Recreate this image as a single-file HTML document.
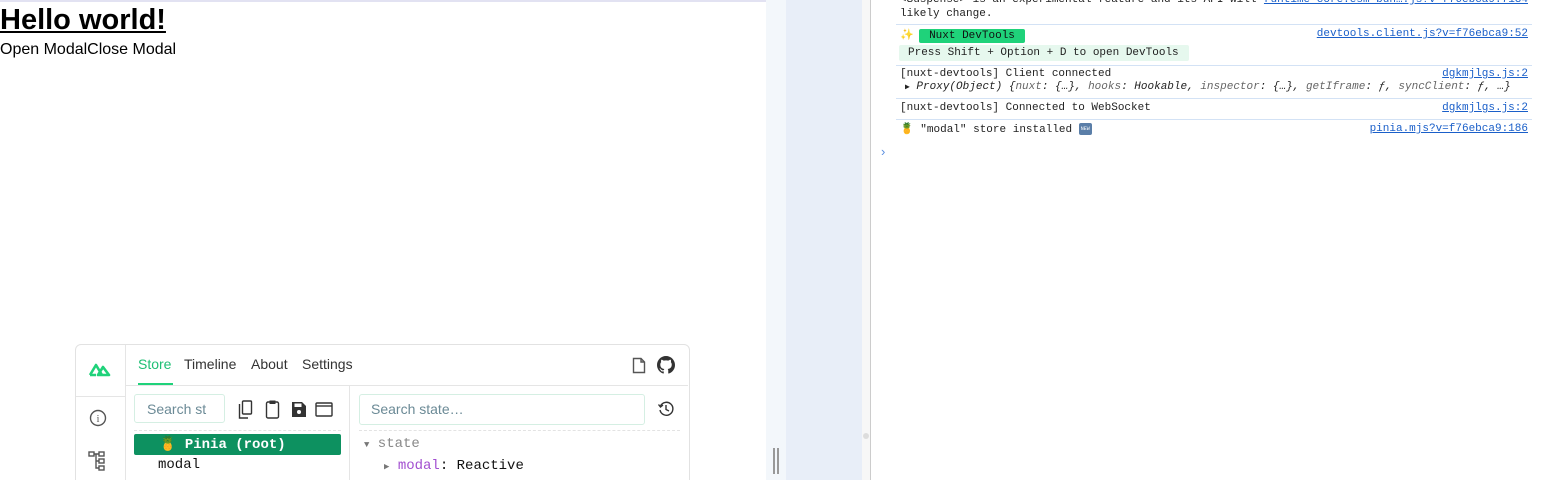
<!DOCTYPE html>
<html style="overflow:hidden;height:480px"><head><style>
body{margin:0;width:1543px;height:480px;overflow:hidden;position:relative;font-family:"Liberation Sans",sans-serif;background:#fff}
.a{position:absolute}
.mono{font-family:"Liberation Mono","DejaVu Sans Mono",monospace}
.c{font-size:11px;color:#222;left:900px;position:absolute;line-height:13px}
.lk{position:absolute;right:15px;font-size:11px;color:#1a5fc9;text-decoration:underline;font-family:"Liberation Mono",monospace}
.sep{position:absolute;left:896px;right:11px;height:1px;background:#d3e2f5}
.ic{stroke:#555;fill:none;stroke-width:1.4}
</style></head><body>
<div class="a" style="left:0;top:0;width:766px;height:2px;background:#e2e2f2"></div>
<div class="a" style="left:0;top:2px;font-size:29px;font-weight:bold;text-decoration:underline;color:#000;line-height:36px">Hello world!</div>
<div class="a" style="left:0;top:41px;font-size:16px;color:#000">Open ModalClose Modal</div>
<div class="a" style="left:766px;top:0;width:20px;height:480px;background:#f3f7fb"></div>
<div class="a" style="left:786px;top:0;width:76px;height:480px;background:#e8eef8"></div>
<div class="a" style="left:862px;top:0;width:8px;height:480px;background:#f7f7f7"></div>
<div class="a" style="left:870px;top:0;width:1px;height:480px;background:#ccc"></div>
<div class="a" style="left:773px;top:448px;width:2px;height:26px;background:#999"></div>
<div class="a" style="left:777px;top:448px;width:2px;height:26px;background:#999"></div>
<div class="a" style="left:863px;top:433px;width:6px;height:6px;border-radius:3px;background:#ddd"></div>

<div class="c mono" style="top:-6px">&lt;Suspense&gt; is an experimental feature and its API will</div>
<div class="lk" style="top:-6px">runtime-core.esm-bun….js?v=f76ebca9:7134</div>
<div class="c mono" style="top:8px">likely change.</div>
<div class="sep" style="top:24px"></div>
<div class="c" style="top:29px;left:900px">✨</div>
<div class="a mono" style="left:919px;top:29px;width:106px;height:14px;background:#1fd27a;border-radius:2px;font-size:11px;line-height:14px;text-align:center;color:#111">Nuxt DevTools</div>
<div class="lk" style="top:28px">devtools.client.js?v=f76ebca9:52</div>
<div class="a mono" style="left:899px;top:45px;width:290px;height:16px;background:#e6f8ee;border-radius:2px;font-size:11px;line-height:16px;color:#222;padding-left:9px;box-sizing:border-box">Press Shift + Option + D to open DevTools</div>
<div class="sep" style="top:65px"></div>
<div class="c mono" style="top:68px">[nuxt-devtools] Client connected</div>
<div class="lk" style="top:68px">dgkmjlgs.js:2</div>
<div class="c mono" style="top:81px;left:905px;font-style:italic"><span style="font-size:8px;font-style:normal">▶</span> Proxy(Object) {<span style="color:#666">nuxt</span>: {…}, <span style="color:#666">hooks</span>: Hookable, <span style="color:#666">inspector</span>: {…}, <span style="color:#666">getIframe</span>: ƒ, <span style="color:#666">syncClient</span>: ƒ, …}</div>
<div class="sep" style="top:98px"></div>
<div class="c mono" style="top:102px">[nuxt-devtools] Connected to WebSocket</div>
<div class="lk" style="top:102px">dgkmjlgs.js:2</div>
<div class="sep" style="top:119px"></div>
<div class="c mono" style="top:123px">🍍 "modal" store installed <span style="display:inline-block;width:13px;height:12px;background:#5a7ea8;border-radius:2px;vertical-align:middle;font-size:5px;color:#fff;line-height:12px;text-align:center">NEW</span></div>
<div class="lk" style="top:123px">pinia.mjs?v=f76ebca9:186</div>
<div class="a" style="left:881px;top:144px;color:#5b8fe0;font-size:13px">›</div>

<div class="a" style="left:75px;top:344px;width:613px;height:140px;border:1px solid #e2e2e2;border-radius:6px;background:#fff"></div>
<div class="a" style="left:125px;top:345px;width:1px;height:135px;background:#e5e5e5"></div>
<div class="a" style="left:76px;top:396px;width:49px;height:1px;background:#e5e5e5"></div>
<div class="a" style="left:126px;top:385px;width:562px;height:1px;background:#e5e5e5"></div>
<div class="a" style="left:349px;top:386px;width:1px;height:94px;background:#e5e5e5"></div>
<svg class="a" style="left:88px;top:360px" width="24" height="18" viewBox="0 0 24 18"><path d="M2 15 L8 5 L14 15 M10 15 L15 7 L21 15 Z M2 15 H8" stroke="#1fd27a" stroke-width="2.6" fill="none" stroke-linejoin="round"/></svg>
<svg class="a" style="left:89px;top:409px" width="18" height="18"><circle cx="9" cy="9" r="7.5" class="ic" stroke-width="1.1"/><text x="9" y="13" font-size="10" text-anchor="middle" fill="#555" font-family="Liberation Serif">i</text></svg>
<svg class="a" style="left:87px;top:450px" width="22" height="22"><g class="ic" stroke-width="1.1"><rect x="2" y="2" width="5" height="4"/><rect x="12" y="2" width="5" height="4"/><rect x="12" y="9" width="5" height="4"/><rect x="12" y="16" width="5" height="4"/><path d="M7 4H12M9 4V18H12M9 11H12"/></g></svg>
<div class="a" style="left:138px;top:356px;font-size:14px;color:#1fbf75">Store</div>
<div class="a" style="left:138px;top:383px;width:35px;height:2px;background:#1fd27a"></div>
<div class="a" style="left:184px;top:356px;font-size:14px;color:#333">Timeline</div>
<div class="a" style="left:251px;top:356px;font-size:14px;color:#333">About</div>
<div class="a" style="left:302px;top:356px;font-size:14px;color:#333">Settings</div>
<svg class="a" style="left:632px;top:357px" width="14" height="17"><path d="M1.5 1.5H9L12.5 5V15.5H1.5Z M9 1.5V5H12.5" class="ic" stroke-width="1"/></svg>
<svg class="a" style="left:657px;top:356px" width="18" height="18" viewBox="0 0 16 16"><path fill="#333" d="M8 0C3.58 0 0 3.58 0 8c0 3.54 2.290 6.530 5.470 7.590.4.07.55-.17.55-.38 0-.19-.01-.82-.01-1.490-2.010.37-2.530-.49-2.690-.94-.09-.23-.48-.94-.82-1.130-.28-.15-.68-.52-.01-.53.63-.01 1.080.58 1.230.82.72 1.210 1.870.87 2.330.66.07-.52.28-.87.51-1.070-1.780-.2-3.640-.89-3.640-3.950 0-.87.31-1.590.82-2.150-.08-.2-.36-1.020.08-2.120 0 0 .67-.21 2.200.82.64-.18 1.320-.27 2-.27.68 0 1.360.09 2 .27 1.530-1.040 2.200-.82 2.200-.82.44 1.100.16 1.920.08 2.120.51.56.82 1.270.82 2.150 0 3.070-1.870 3.750-3.650 3.950.29.25.54.73.54 1.480 0 1.070-.01 1.930-.01 2.200 0 .21.15.46.55.38A8.013 8.013 0 0016 8c0-4.420-3.580-8-8-8z"/></svg>
<div class="a" style="left:134px;top:394px;width:91px;height:29px;border:1px solid #d5efe3;border-radius:3px;box-sizing:border-box;font-size:14px;color:#6b8a96;padding:6px 0 0 12px;overflow:hidden;white-space:nowrap">Search st</div>
<svg class="a" style="left:236px;top:399px" width="110" height="22"><g fill="none" stroke="#333" stroke-width="1.4"><rect x="6.5" y="2" width="9" height="13" rx="1"/><path d="M3.5 5V19H12"/><rect x="30.5" y="3" width="12" height="16" rx="1.5"/><rect x="80" y="4" width="16" height="13" rx="1"/><path d="M80 7H96"/></g><rect x="33.5" y="1.5" width="6" height="3.5" fill="#333"/><path d="M56 3H66L70 7V18H56Z" fill="#333"/><rect x="58.5" y="4.5" width="7" height="3.5" fill="#fff"/><circle cx="63" cy="13" r="2" fill="#fff"/></svg>
<div class="a" style="left:134px;top:430px;width:207px;height:0;border-top:1px dashed #e3e3e3"></div>
<div class="a" style="left:134px;top:434px;width:207px;height:21px;background:#0d9160;border-radius:2px"></div>
<div class="a mono" style="left:159px;top:436px;font-size:14px;color:#fff;font-weight:bold">🍍 Pinia (root)</div>
<div class="a mono" style="left:158px;top:457px;font-size:14px;color:#111">modal</div>
<div class="a" style="left:359px;top:394px;width:286px;height:31px;border:1px solid #d5efe3;border-radius:3px;box-sizing:border-box;font-size:14px;color:#6b8a96;padding:6px 0 0 11px">Search state…</div>
<svg class="a" style="left:657px;top:400px" width="18" height="18"><g fill="none" stroke="#333" stroke-width="1.4"><path d="M3.5 6A6.5 6.5 0 1 1 3 10"/><path d="M1.5 4.5L3.5 7L6 5"/><path d="M9 5V9.5L12 11"/></g></svg>
<div class="a" style="left:359px;top:430px;width:321px;height:0;border-top:1px dashed #e3e3e3"></div>
<div class="a mono" style="left:364px;top:436px;font-size:14px;color:#888"><span style="font-size:9px;color:#777">▼</span> state</div>
<div class="a mono" style="left:384px;top:458px;font-size:14px;color:#111"><span style="font-size:9px;color:#777">▶</span> <span style="color:#a24fd0">modal</span>: Reactive</div>
</body></html>
